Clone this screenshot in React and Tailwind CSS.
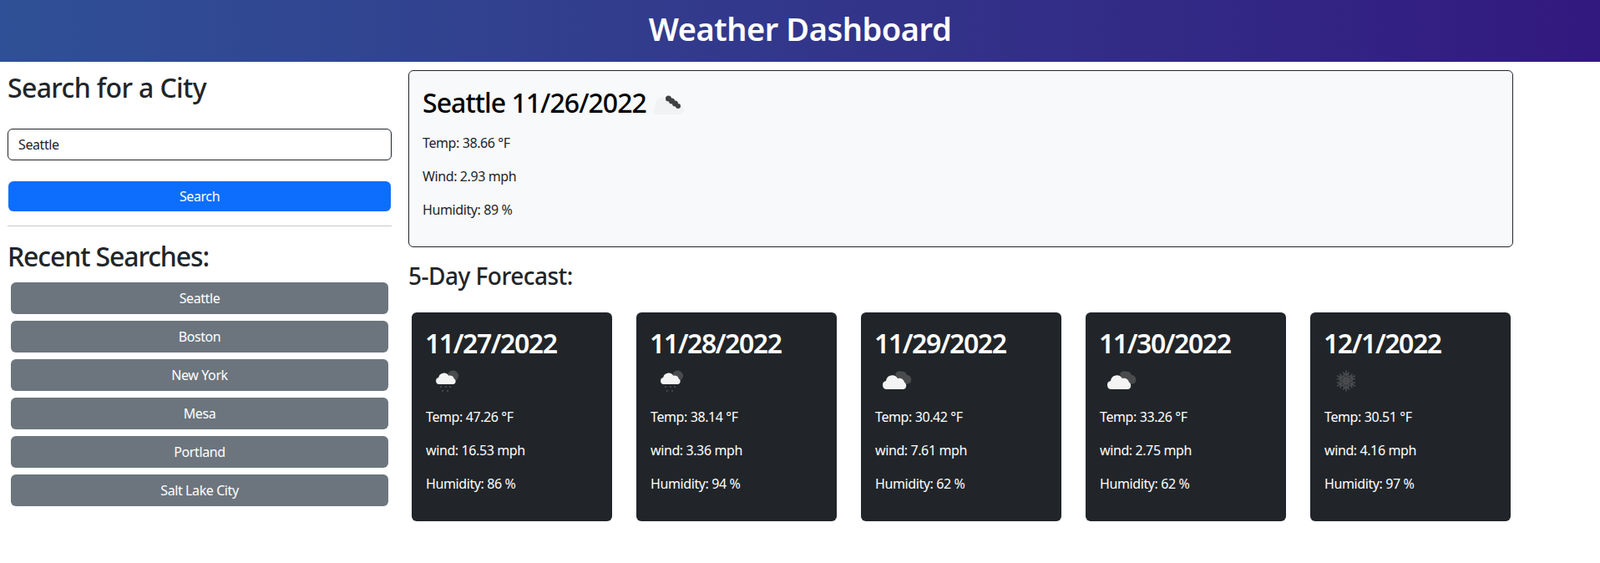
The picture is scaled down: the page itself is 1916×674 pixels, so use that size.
import React from "react";

const recent = ["Seattle", "Boston", "New York", "Mesa", "Portland", "Salt Lake City"];

const forecast = [
  { date: "11/27/2022", temp: "47.26", wind: "16.53", humidity: "86", icon: "rain" },
  { date: "11/28/2022", temp: "38.14", wind: "3.36", humidity: "94", icon: "rain" },
  { date: "11/29/2022", temp: "30.42", wind: "7.61", humidity: "62", icon: "clouds" },
  { date: "11/30/2022", temp: "33.26", wind: "2.75", humidity: "62", icon: "clouds" },
  { date: "12/1/2022", temp: "30.51", wind: "4.16", humidity: "97", icon: "snow" },
];

// small weather icons, drawn on the same 50x50 box as the original images
const WeatherIcon = ({ type }) => {
  if (type === "rain") {
    return (
      <svg width="50" height="50" viewBox="0 0 50 50" className="block">
        <circle cx="32.5" cy="13" r="6.5" fill="#4a4b4d" />
        <path d="M16 23a4 4 0 0 1-.8-7.9a6.5 6.5 0 0 1 12-2.3a5 5 0 0 1 6.5 3.5A3.6 3.6 0 0 1 33 23z" fill="#f4f4f4" />
        <g fill="#4f5256">
          <circle cx="18" cy="26" r="1" />
          <circle cx="24" cy="26" r="1" />
          <circle cx="29" cy="26" r="1" />
          <circle cx="20" cy="31" r="1" />
          <circle cx="26" cy="31" r="1" />
        </g>
      </svg>
    );
  }
  if (type === "clouds") {
    return (
      <svg width="50" height="50" viewBox="0 0 50 50" className="block">
        <path d="M24 11a5.5 5.5 0 0 1 8-3a5 5 0 0 1 6 4a5.5 5.5 0 0 1 2 10.5L30 22z" fill="#4a4b4d" />
        <path d="M14 29a5 5 0 0 1-1-9.9a7.5 7.5 0 0 1 14-3a6 6 0 0 1 8 4.5A4.6 4.6 0 0 1 34 29z" fill="#f4f4f4" />
      </svg>
    );
  }
  return (
    <svg width="50" height="50" viewBox="0 0 50 50" className="block">
      <g stroke="#4a4c4f" strokeWidth="1.6" strokeLinecap="round" fill="none">
        {[0, 60, 120, 180, 240, 300].map((deg) => (
          <path key={deg} transform={`rotate(${deg} 26 19)`} d="M26 19v-12M22.5 9l3.5 3.5 3.5-3.5M21 13l5 4 5-4" />
        ))}
      </g>
      <circle cx="26" cy="19" r="3" fill="none" stroke="#4a4c4f" strokeWidth="2" />
    </svg>
  );
};

// the current-weather icon: a dark lumpy band over an almost invisible cloud
const CurrentIcon = () => (
  <svg width="50" height="50" viewBox="0 0 50 50" className="block">
    <path d="M8 36a5 5 0 0 1 0-9 9 9 0 0 1 15-9 8 8 0 0 1 12 8 5 5 0 0 1 3 10z" fill="#f1f2f3" />
    <g fill="#3f4143">
      <circle cx="23.5" cy="17" r="3.5" />
      <circle cx="27.5" cy="20" r="3.5" />
      <circle cx="31.5" cy="23" r="3.5" />
      <circle cx="35" cy="26" r="3" />
    </g>
  </svg>
);

const App = () => {
  return (
    <div className="min-h-[674px] bg-white text-[#212529] font-['Noto_Sans',sans-serif] text-base tracking-[-0.025em]">
      <header className="h-[74px] pb-[6px] flex items-center justify-center bg-gradient-to-r from-[#2f5096] to-[#32187f]">
        <h1 className="text-[38px] font-semibold text-white leading-[48px] tracking-[-0.012em]">Weather Dashboard</h1>
      </header>

      <div className="flex">
        <aside className="w-[479px] pl-[9px] pr-[10px] pt-3">
          <h2 className="text-[32px] font-medium leading-[38px] tracking-[-0.02em]">Search for a City</h2>
          <input
            type="text"
            defaultValue="Seattle"
            className="block w-full h-[38px] mt-[30px] px-3 border border-[#212529] rounded-md bg-white text-base outline-none"
          />
          <button className="block w-[458px] h-[36px] mx-auto mt-[25px] rounded-md bg-[#0d6efd] text-white">
            Search
          </button>
          <hr className="mt-[17px] border-t border-[#c8c9ca]" />
          <h2 className="mt-[17px] text-[32px] font-medium leading-[38px] tracking-[-0.035em]">Recent Searches:</h2>
          <div className="mt-[12px] px-[4px] flex flex-col gap-2">
            {recent.map((city) => (
              <button key={city} className="h-[38px] rounded-md bg-[#6c757d] text-white">
                {city}
              </button>
            ))}
          </div>
        </aside>

        <main className="w-[1323px] ml-[10px] pt-[10px]">
          <section className="h-[212px] p-4 border border-[#212529] rounded-md bg-[#f8f9fa]">
            <div className="flex items-start h-[50px] mb-2">
              <h2 className="mt-[3px] text-[32px] font-medium text-black leading-[38px] tracking-[-0.03em]">Seattle 11/26/2022</h2>
              <div className="ml-[3px]">
                <CurrentIcon />
              </div>
            </div>
            <p className="mb-4 leading-6">Temp: 38.66 °F</p>
            <p className="mb-4 leading-6">Wind: 2.93 mph</p>
            <p className="leading-6">Humidity: 89 %</p>
          </section>

          <h3 className="mt-[17px] text-[28px] font-medium leading-[34px] tracking-[-0.018em]">5-Day Forecast:</h3>

          <div className="flex gap-[29px] mt-[27px] pl-[4px]">
            {forecast.map((day) => (
              <div key={day.date} className="w-[240px] h-[250px] p-[17px] rounded-md bg-[#212529] text-white">
                <h2 className="mt-[1px] -ml-[1px] text-[32px] font-semibold leading-[38px] mb-[7px] tracking-[-0.045em]">{day.date}</h2>
                <WeatherIcon type={day.icon} />
                <p className="mb-4 leading-6">Temp: {day.temp} °F</p>
                <p className="mb-4 leading-6">wind: {day.wind} mph</p>
                <p className="leading-6">Humidity: {day.humidity} %</p>
              </div>
            ))}
          </div>
        </main>
      </div>
    </div>
  );
};

export default App;
